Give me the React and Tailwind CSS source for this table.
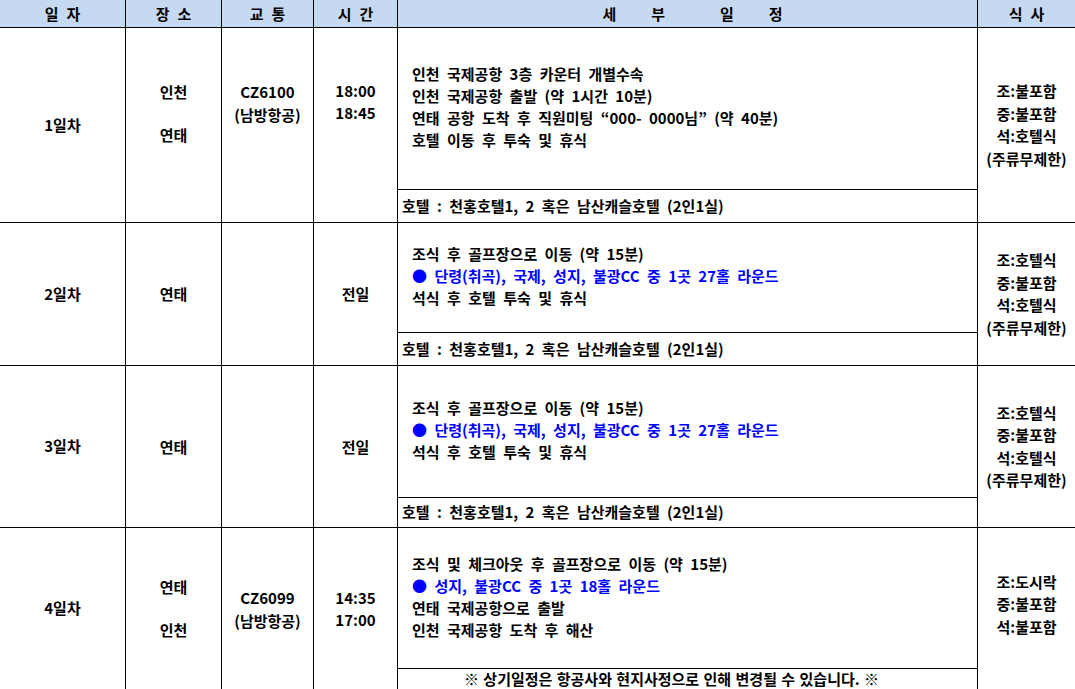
import React from 'react';

const days = [
  {
    day: '1일차',
    h: 'h-[195px]',
    hotelH: 'h-[33px]',
    places: ['인천', '연태'],
    placePad: 'pb-[23px]',
    flight: ['CZ6100', '(남방항공)'],
    flightPad: 'pb-[44px]',
    times: ['18:00', '18:45'],
    timePad: 'pb-[46px]',
    linePad: 'pb-[4px]',
    lines: [
      { t: '인천 국제공항 3층 카운터 개별수속' },
      { t: '인천 국제공항 출발 (약 1시간 10분)' },
      { t: '연태 공항 도착 후 직원미팅 “000- 0000님” (약 40분)' },
      { t: '호텔 이동 후 투숙 및 휴식' },
    ],
    footer: '호텔 : 천홍호텔1, 2 혹은 남산캐슬호텔 (2인1실)',
    meals: ['조:불포함', '중:불포함', '석:호텔식', '(주류무제한)'],
  },
  {
    day: '2일차',
    h: 'h-[143px]',
    hotelH: 'h-[33px]',
    places: ['연태'],
    times: ['전일'],
    linePad: 'pb-[3px]',
    lines: [
      { t: '조식 후 골프장으로 이동 (약 15분)' },
      { t: '● 단령(취곡), 국제, 성지, 불광CC 중 1곳 27홀 라운드', blue: true },
      { t: '석식 후 호텔 투숙 및 휴식' },
    ],
    footer: '호텔 : 천홍호텔1, 2 혹은 남산캐슬호텔 (2인1실)',
    meals: ['조:호텔식', '중:불포함', '석:호텔식', '(주류무제한)'],
  },
  {
    day: '3일차',
    h: 'h-[162px]',
    hotelH: 'h-[30px]',
    places: ['연태'],
    times: ['전일'],
    linePad: 'pb-[3px]',
    lines: [
      { t: '조식 후 골프장으로 이동 (약 15분)' },
      { t: '● 단령(취곡), 국제, 성지, 불광CC 중 1곳 27홀 라운드', blue: true },
      { t: '석식 후 호텔 투숙 및 휴식' },
    ],
    footer: '호텔 : 천홍호텔1, 2 혹은 남산캐슬호텔 (2인1실)',
    meals: ['조:호텔식', '중:불포함', '석:호텔식', '(주류무제한)'],
  },
  {
    day: '4일차',
    h: 'h-[162px]',
    hotelH: 'h-[21px]',
    places: ['연태', '인천'],
    flight: ['CZ6099', '(남방항공)'],
    times: ['14:35', '17:00'],
    linePad: 'pb-[3px]',
    lines: [
      { t: '조식 및 체크아웃 후 골프장으로 이동 (약 15분)' },
      { t: '● 성지, 불광CC 중 1곳 18홀 라운드', blue: true },
      { t: '연태 국제공항으로 출발' },
      { t: '인천 국제공항 도착 후 해산' },
    ],
    note: '※ 상기일정은 항공사와 현지사정으로 인해 변경될 수 있습니다. ※',
    meals: ['조:도시락', '중:불포함', '석:불포함'],
    mealPad: 'pb-[8px]',
  },
];

function Cell({ w, className = '', children }) {
  return (
    <div className={`${w} shrink-0 border-r border-black flex flex-col items-center justify-center ${className}`}>
      {children}
    </div>
  );
}

export default function App() {
  return (
    <div
      className="w-[1075px] h-[689px] overflow-hidden bg-white text-black font-bold text-[15px]"
      style={{ fontFamily: '"Noto Sans CJK KR", "Noto Sans", sans-serif' }}
    >
      {/* header */}
      <div className="flex h-[28px] border-b border-black bg-[#c5d9f1] leading-[26px]">
        <Cell w="w-[126px]"><div className="flex gap-2"><span>일</span><span>자</span></div></Cell>
        <Cell w="w-[96px]"><div className="flex gap-2"><span>장</span><span>소</span></div></Cell>
        <Cell w="w-[92px]"><div className="flex gap-2"><span>교</span><span>통</span></div></Cell>
        <Cell w="w-[84px]"><div className="flex gap-2"><span>시</span><span>간</span></div></Cell>
        <Cell w="w-[580px]">
          <div className="flex pl-[10px]">
            <span>세</span>
            <span className="ml-[35px]">부</span>
            <span className="ml-[55px]">일</span>
            <span className="ml-[35px]">정</span>
          </div>
        </Cell>
        <div className="flex-1 flex items-center justify-center gap-2"><span>식</span><span>사</span></div>
      </div>

      {days.map((d) => (
        <div key={d.day} className={`flex ${d.h} border-b border-black`}>
          <Cell w="w-[126px]">{d.day}</Cell>
          <Cell w="w-[96px]" className={`gap-[21px] leading-[22px] ${d.placePad || ''}`}>
            {d.places.map((p) => <div key={p}>{p}</div>)}
          </Cell>
          <Cell w="w-[92px]" className={`leading-[23px] ${d.flightPad || ''}`}>
            {(d.flight || []).map((p) => <div key={p}>{p}</div>)}
          </Cell>
          <Cell w="w-[84px]" className={`leading-[22px] ${d.timePad || ''}`}>
            {d.times.map((p) => <div key={p}>{p}</div>)}
          </Cell>
          <div className="w-[580px] shrink-0 border-r border-black flex flex-col [word-spacing:4px]">
            <div className={`flex-1 flex flex-col justify-center pl-[14px] leading-[22px] ${d.linePad}`}>
              {d.lines.map((l) => (
                <div key={l.t} className={l.blue ? 'text-[#0000ff]' : ''}>{l.t}</div>
              ))}
            </div>
            {d.footer && (
              <div className={`${d.hotelH} shrink-0 border-t border-black pl-[4px] flex items-center`}>{d.footer}</div>
            )}
            {d.note && (
              <div className={`${d.hotelH} shrink-0 border-t border-black flex items-center justify-center pr-[32px] leading-[20px] [word-spacing:1px]`}>{d.note}</div>
            )}
          </div>
          <div className={`flex-1 flex flex-col items-center justify-center leading-[22.5px] ${d.mealPad || ''}`}>
            {d.meals.map((m) => <div key={m}>{m}</div>)}
          </div>
        </div>
      ))}
    </div>
  );
}
